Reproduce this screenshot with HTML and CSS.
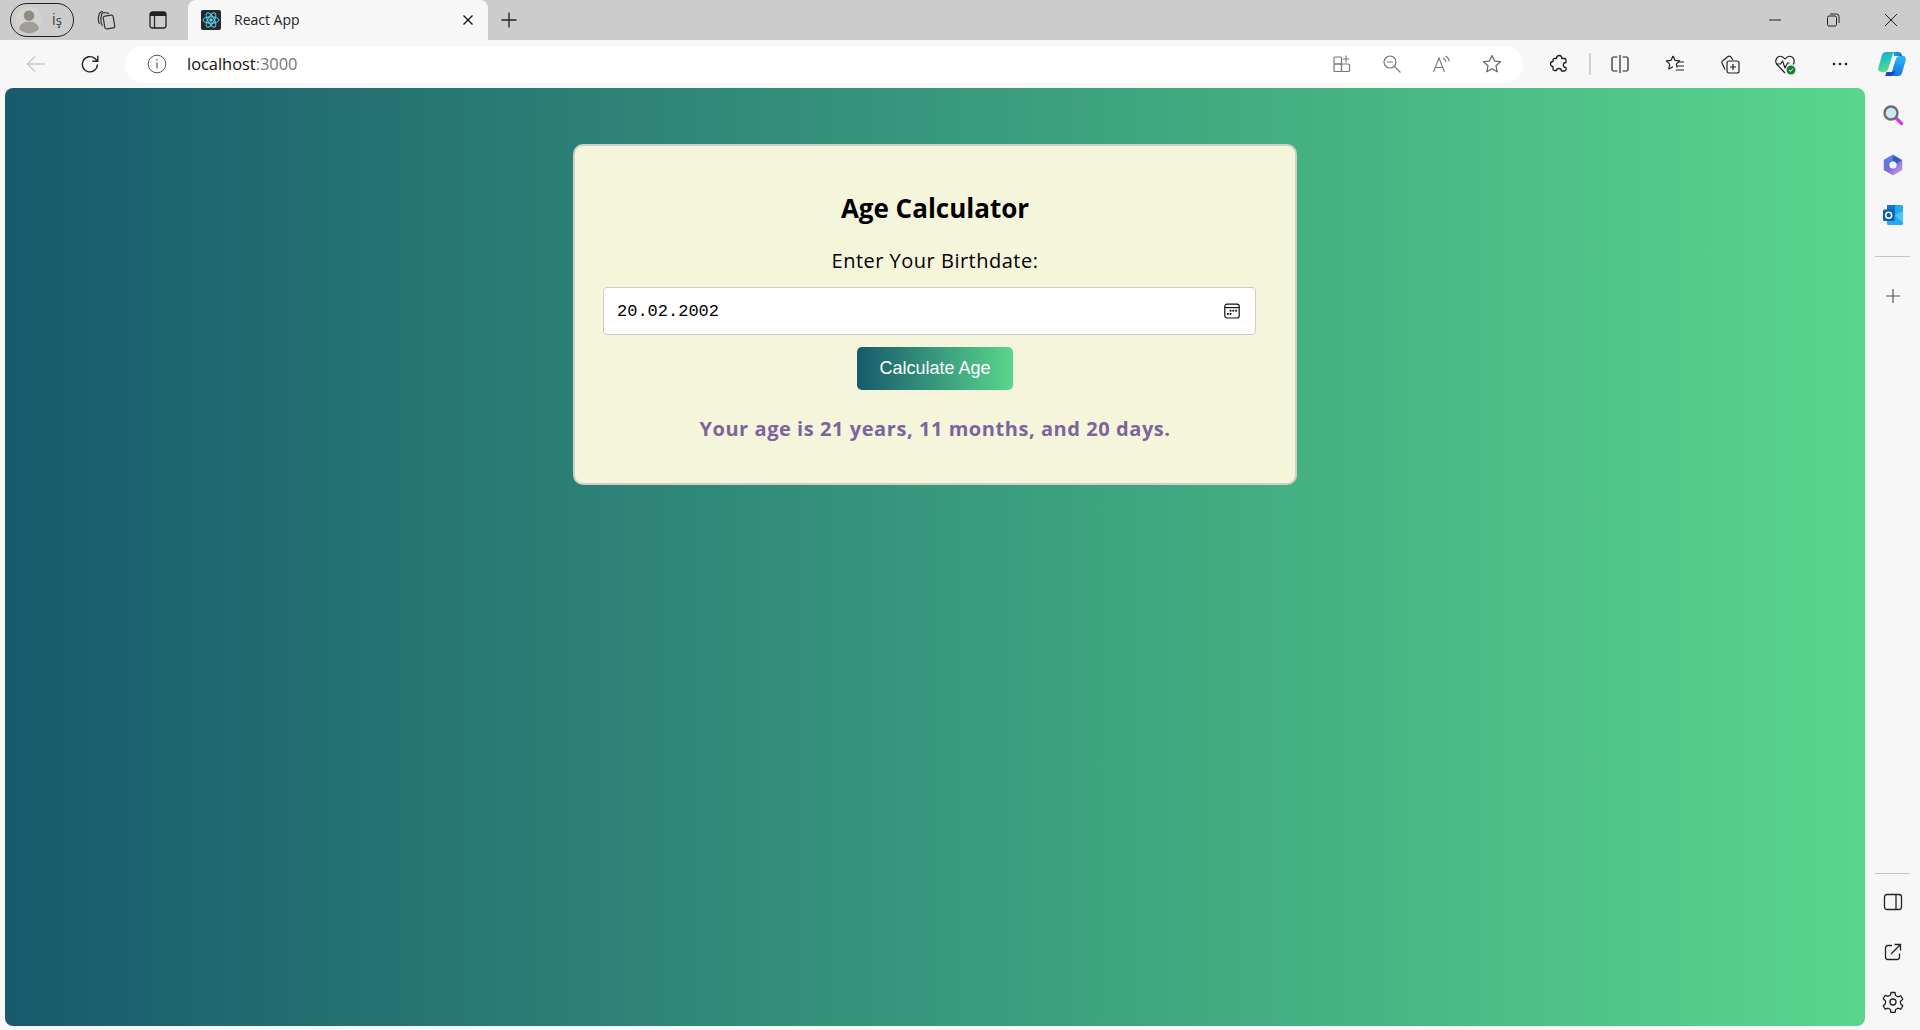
FILE: index.html
```html
<!DOCTYPE html>
<html lang="en">
<head>
<meta charset="utf-8">
<title>React App</title>
<link rel="stylesheet" href="styles.css">
</head>
<body>
<div class="browser">
  <header class="tabbar">
    <div class="profile">
      <svg class="avatar" viewBox="0 0 32 32"><circle cx="16" cy="16" r="15.5" fill="#d4d2cf"/><circle cx="16" cy="11" r="6" fill="#8e8b87"/><path d="M4.5 26c1-6 6-8 11.5-8s10.500 2 11.500 8a15.500 15.500 0 0 1-23 0z" fill="#a09d99"/></svg>
      <span class="profile-name">İş</span>
    </div>
    <div class="cell cell-tabs">
      <svg class="i20" viewBox="0 0 20 20" fill="none" stroke="#333" stroke-width="1.200"><rect x="8" y="5.500" width="10" height="13" rx="2" transform="rotate(-10 13 12)"/><path d="M6.500 16C4.500 13 4.500 9 5.500 4.500 6 3 7 2.500 8.500 2.500L13 3.300M3.500 14C2 11 2 8 3 4.500 3.500 2.500 5 1.500 7 1.500"/></svg>
    </div>
    <div class="cell cell-tabs">
      <svg class="i20" viewBox="0 0 20 20"><rect x="2" y="2" width="16" height="16" rx="2.500" fill="none" stroke="#222" stroke-width="1.300"/><path d="M2 4.500A2.500 2.500 0 0 1 4.500 2h11A2.500 2.500 0 0 1 18 4.500V6H2z" fill="#222"/><path d="M6.500 6v12" stroke="#222" stroke-width="1.200"/></svg>
    </div>
    <div class="tab">
      <svg class="favicon" viewBox="0 0 20 20"><rect width="20" height="20" rx="2" fill="#25282c"/><g fill="none" stroke="#61dafb" stroke-width="1"><ellipse cx="10" cy="10" rx="8" ry="3.200"/><ellipse cx="10" cy="10" rx="8" ry="3.200" transform="rotate(60 10 10)"/><ellipse cx="10" cy="10" rx="8" ry="3.200" transform="rotate(120 10 10)"/></g><circle cx="10" cy="10" r="1.700" fill="#61dafb"/></svg>
      <span class="tab-title">React App</span>
      <svg class="tab-close" viewBox="0 0 12 12"><path d="M1.500 1.500l9 9M10.500 1.500l-9 9" stroke="#111" stroke-width="1.300"/></svg>
    </div>
    <div class="cell cell-plus">
      <svg class="i20" viewBox="0 0 20 20"><path d="M10 2.500v15M2.500 10h15" stroke="#222" stroke-width="1.300"/></svg>
    </div>
    <div class="spacer"></div>
    <div class="cell cell-win"><svg class="i14" viewBox="0 0 14 14"><path d="M1 7h12" stroke="#222" stroke-width="1"/></svg></div>
    <div class="cell cell-win"><svg class="i14" viewBox="0 0 14 14" fill="none" stroke="#222" stroke-width="1"><rect x="1.500" y="3" width="9" height="10" rx="1.500"/><path d="M4 1h6.500A2.500 2.500 0 0 1 13 3.500V10"/></svg></div>
    <div class="cell cell-win"><svg class="i14" viewBox="0 0 14 14"><path d="M1 1l12 12M13 1L1 13" stroke="#222" stroke-width="1"/></svg></div>
  </header>

  <nav class="toolbar">
    <div class="cell cell-nav"><svg class="i20" viewBox="0 0 20 20" fill="none" stroke="#c9c9c9" stroke-width="1.300"><path d="M19 10H1.500M9 2.500L1.500 10 9 17.500"/></svg></div>
    <div class="cell cell-nav cell-reload"><svg class="i20" viewBox="0 0 20 20" fill="none" stroke="#222" stroke-width="1.400"><path d="M17.500 10.500A7.600 7.600 0 1 1 15 4.600L17.500 7"/><path d="M17.800 1.800V7.300H12.300"/></svg></div>
    <div class="address">
      <svg class="info" viewBox="0 0 20 20" fill="none" stroke="#555" stroke-width="1"><circle cx="10" cy="10" r="8.800"/><path d="M10 8.500v6" stroke-width="1.200"/><circle cx="10" cy="5.800" r=".8" fill="#555" stroke="none"/></svg>
      <span class="url">localhost<span class="url-port">:3000</span></span>
      <div class="spacer"></div>
      <div class="cell cell-addr"><svg class="i20" viewBox="0 0 20 20" fill="none" stroke="#777" stroke-width="1.200"><rect x="2" y="3" width="7.500" height="7" rx="1"/><rect x="2" y="10" width="7.500" height="7.500" rx="1"/><rect x="9.500" y="10" width="8" height="7.500" rx="1"/><path d="M14 1.500v7M10.800 5h6.500"/></svg></div>
      <div class="cell cell-addr"><svg class="i20" viewBox="0 0 20 20" fill="none" stroke="#777" stroke-width="1.200"><circle cx="8" cy="8" r="6"/><path d="M12.500 12.500l6 6M5 8h6"/></svg></div>
      <div class="cell cell-addr"><svg class="i20" viewBox="0 0 20 20" fill="none" stroke="#777" stroke-width="1.100"><path d="M1.500 18L7 4l5.500 14M3.300 13.500h7.400"/><path d="M11 4c1.500.7 2.500 2 3 4M13.500 2c2 1 3.300 3 3.800 5.500"/></svg></div>
      <div class="cell cell-addr"><svg class="i20" viewBox="0 0 20 20" fill="none" stroke="#666" stroke-width="1.200" stroke-linejoin="round"><path d="M10 1.500l2.500 5.600 6 .6-4.500 4.100 1.300 6-5.300-3.100-5.300 3.100 1.300-6L1.500 7.700l6-.6z"/></svg></div>
    </div>
    <div class="cell cell-ext"><svg class="i20" viewBox="0 0 20 20" fill="none" stroke="#222" stroke-width="1.300" stroke-linejoin="round"><path d="M7.500 4.500C7.500 2.800 8.700 1.500 10.200 1.500s2.700 1.300 2.700 3h2.600c.8 0 1.500.7 1.500 1.500v2.500c-1.600 0-2.700 1-2.700 2.500s1.100 2.500 2.700 2.500v2c0 .8-.7 1.500-1.500 1.500h-3c0-1.500-1-2.500-2.500-2.500S7.500 15 7.500 16.500h-2c-.8 0-1.500-.7-1.500-1.500v-2.500c-1.500 0-2.500-1-2.500-2.500S2.500 7.500 4 7.500V6c0-.8.700-1.500 1.500-1.500z"/></svg></div>
    <div class="tool-sep"></div>
    <div class="cell cell-tool"><svg class="i20" viewBox="0 0 20 20" fill="none" stroke="#222" stroke-width="1.200"><path d="M7.500 3H3.500A1.500 1.500 0 0 0 2 4.500v11A1.500 1.500 0 0 0 3.500 17h4M12.500 3h4A1.500 1.500 0 0 1 18 4.500v11a1.500 1.500 0 0 1-1.500 1.500h-4M10 1v18"/></svg></div>
    <div class="cell cell-tool"><svg class="i20" viewBox="0 0 20 20" fill="none" stroke="#222" stroke-width="1.200" stroke-linejoin="round"><path d="M8 2l2 4.300 4.700.6-3.400 3.200.8 3.400M8 2L6 6.300l-4.700.6 3.400 3.200L3.800 15 8 12.800"/><path d="M13 8h6M12 12h7M11 16h8"/></svg></div>
    <div class="cell cell-tool"><svg class="i20" viewBox="0 0 20 20" fill="none" stroke="#222" stroke-width="1.200"><rect x="7" y="7" width="12" height="12" rx="2"/><path d="M13 10v6M10 13h6"/><path d="M5 15.500L2 9c-.4-1 0-1.700.8-2.200L8 2.500c1-.7 2-.5 2.700.4L13 6"/></svg></div>
    <div class="cell cell-tool"><svg class="i20 wide" viewBox="0 0 22 22" fill="none" stroke="#222" stroke-width="1.200" stroke-linejoin="round"><path d="M11 20L3 11.500C1 9 1.500 5.500 4 4c2.500-1.500 5-.5 7 2 2-2.500 4.500-3.500 7-2 2.500 1.500 3 5 1 7.500"/><path d="M2 11h4.500l2-3 2.500 7 2.500-5h2"/><circle cx="17" cy="17" r="4.500" fill="#1c7d36" stroke="none"/><path d="M15 17l1.500 1.500 2.500-3" stroke="#fff" stroke-width="1"/></svg></div>
    <div class="cell cell-tool"><svg class="i20" viewBox="0 0 20 20" fill="#222"><circle cx="4" cy="10" r="1.300"/><circle cx="10" cy="10" r="1.300"/><circle cx="16" cy="10" r="1.300"/></svg></div>
    <div class="cell cell-copilot"><svg class="copilot" viewBox="0 0 30 30">
      <defs>
        <linearGradient id="cpA" x1="0" y1="0" x2="0" y2="1"><stop offset="0" stop-color="#1b6fe0"/><stop offset=".6" stop-color="#1e9ff0"/><stop offset="1" stop-color="#2ab8f2"/></linearGradient>
        <linearGradient id="cpB" x1="0" y1="0" x2=".3" y2="1"><stop offset="0" stop-color="#16a8df"/><stop offset=".55" stop-color="#2cc9b4"/><stop offset="1" stop-color="#5fd88a"/></linearGradient>
        <linearGradient id="cpC" x1="0" y1="0" x2="1" y2="0"><stop offset="0" stop-color="#15a0e4"/><stop offset="1" stop-color="#1f6fe0"/></linearGradient>
      </defs>
      <path d="M9 3h11c-2.500 0-4 1.500-4.800 4L11.500 19c-.8 2.500-2.300 4-4.500 4H4.200c-2.200 0-3.600-2-2.900-4.200L5 6c.6-2 2-3 4-3z" fill="url(#cpB)"/>
      <g transform="rotate(180 15 15)"><path d="M9 3h11c-2.500 0-4 1.500-4.800 4L11.500 19c-.8 2.500-2.300 4-4.500 4H4.200c-2.200 0-3.600-2-2.900-4.200L5 6c.6-2 2-3 4-3z" fill="url(#cpA)"/></g>
      <path d="M17 3h4c2 0 3.400 1.200 4 3l.7 2.500c-1-1-2-1.500-3.500-1.500H16.800c.6-2 .2-4 .2-4z" fill="url(#cpC)"/>
      <path d="M8 27h5c2 0 3.500-1 4.300-3l1-3c-.8 1.300-2 2-3.800 2H9.500c-.5 1.800-.7 3-1.500 4z" fill="#1746b8"/>
    </svg></div>
  </nav>

  <div class="main">
    <main class="viewport">
      <section class="card">
        <h1 class="title">Age Calculator</h1>
        <label class="label" for="birth">Enter Your Birthdate:</label>
        <div class="date-input" id="birth">
          <span class="date-value">20.02.2002</span>
          <svg class="calendar" viewBox="0 0 16 16" fill="none" stroke="#111" stroke-width="1.200"><rect x=".8" y="1.200" width="14.400" height="13.800" rx="2.200"/><path d="M.8 4.600h14.400" stroke-width="1.200"/><g fill="#111" stroke="none"><rect x="5.600" y="6.800" width="1.800" height="1.800"/><rect x="8.400" y="6.800" width="1.800" height="1.800"/><rect x="11.200" y="6.800" width="1.800" height="1.800"/><rect x="3" y="10" width="1.800" height="1.800"/><rect x="5.600" y="10" width="1.800" height="1.800"/></g></svg>
        </div>
        <button class="calc" type="button">Calculate Age</button>
        <p class="result">Your age is 21 years, 11 months, and 20 days.</p>
      </section>
    </main>
    <aside class="sidebar">
      <div class="cell cell-side first"><svg class="i22" viewBox="0 0 22 22"><path d="M13 13l6.500 6.500" stroke="#c93ee0" stroke-width="3.400" stroke-linecap="round"/><circle cx="9" cy="9" r="6.500" fill="#cfe6f5" stroke="#6d6d6d" stroke-width="2.400"/></svg></div>
      <div class="cell cell-side"><svg class="i22" viewBox="0 0 22 22"><defs><linearGradient id="m3" gradientUnits="userSpaceOnUse" x1="2" y1="2" x2="20" y2="20"><stop offset="0" stop-color="#3f8fe0"/><stop offset=".5" stop-color="#8068d8"/><stop offset="1" stop-color="#cfa4ec"/></linearGradient></defs><path d="M11 1.500l8.500 4.800v9.400L11 20.500l-8.500-4.800V6.300z" fill="url(#m3)" stroke="url(#m3)" stroke-width="1.500" stroke-linejoin="round"/><path d="M11 1.500l8.500 4.800-4.500 3L11 7z" fill="#2a5cc0"/><circle cx="11" cy="11" r="3.600" fill="#f7f7f7"/></svg></div>
      <div class="cell cell-side"><svg class="i22" viewBox="0 0 22 22"><rect x="5" y="1" width="16" height="20" rx="1.500" fill="#28a8ea"/><path d="M5 1h8v10H5z" fill="#0f78d4"/><path d="M13 11l8-4v12z" fill="#50c4f5"/><rect x="1" y="5.500" width="11.500" height="11.500" rx="1.500" fill="#0a5fb0"/><circle cx="6.700" cy="11.200" r="3" fill="none" stroke="#fff" stroke-width="1.500"/></svg></div>
      <div class="side-sep sep-top"></div>
      <div class="cell cell-side"><svg class="i16" viewBox="0 0 16 16"><path d="M8 1v14M1 8h14" stroke="#555" stroke-width="1.200"/></svg></div>
      <div class="spacer"></div>
      <div class="side-sep sep-bottom"></div>
      <div class="cell cell-side"><svg class="i20" viewBox="0 0 20 20" fill="none" stroke="#222" stroke-width="1.300"><rect x="1.500" y="2.500" width="17" height="15" rx="2.500"/><path d="M13 2.500v15"/></svg></div>
      <div class="cell cell-side"><svg class="i20" viewBox="0 0 20 20" fill="none" stroke="#222" stroke-width="1.300"><path d="M9 3.500H5A2.500 2.500 0 0 0 2.500 6v9A2.500 2.500 0 0 0 5 17.500h9a2.500 2.500 0 0 0 2.500-2.500v-3.500"/><path d="M8 12l9-9M11.500 2.500h6v6"/></svg></div>
      <div class="cell cell-side"><svg class="i22" viewBox="0 0 22 22" fill="none" stroke="#222" stroke-width="1.300" stroke-linejoin="round"><circle cx="11" cy="11" r="3"/><path d="M9 1.500h4l.6 3 2.300 1.300 2.900-1 2 3.500-2.300 2v2.400l2.300 2-2 3.500-2.900-1-2.300 1.300-.6 3H9l-.6-3-2.300-1.300-2.900 1-2-3.500 2.300-2V9.800L1.200 7.800l2-3.500 2.900 1 2.300-1.300z"/></svg></div>
    </aside>
  </div>
</div>
</body>
</html>
```
FILE: styles.css
```css
* { box-sizing: border-box; }
html, body { margin: 0; height: 100%; overflow: hidden; }
body { font-family: "Open Sans", "Noto Sans", sans-serif; background: #f7f7f7; }
.browser { display: flex; flex-direction: column; width: 1920px; height: 1030px; }
.spacer { flex: 1; }
.cell { display: flex; align-items: center; justify-content: center; flex: none; }
svg { display: block; flex: none; }
.i14 { width: 14px; height: 14px; }
.i16 { width: 16px; height: 16px; }
.i20 { width: 20px; height: 20px; }
.i22 { width: 22px; height: 22px; }
.wide { width: 22px; height: 22px; }

.tabbar { display: flex; align-items: center; height: 40px; padding-left: 10px; background: #cccccc; flex: none; }
.profile { display: flex; align-items: center; width: 64px; height: 34px; margin-right: 6px; padding-left: 4px; border: 1.500px solid #222; border-radius: 17px; }
.avatar { width: 28px; height: 28px; }
.profile-name { margin-left: 9px; font-size: 13px; color: #333; }
.cell-tabs { width: 52px; height: 40px; }
.tab { display: flex; align-items: center; width: 300px; height: 40px; margin-left: 4px; padding: 0 13px; background: #f7f7f7; border-radius: 8px 8px 0 0; }
.favicon { width: 20px; height: 20px; }
.tab-title { margin-left: 13px; margin-bottom: 2px; font-size: 14px; color: #222; flex: 1; }
.tab-close { width: 12px; height: 12px; margin-right: 1px; }
.cell-plus { width: 42px; height: 40px; }
.cell-win { width: 58px; height: 40px; }

.toolbar { display: flex; align-items: center; height: 48px; padding-left: 8px; background: #f7f7f7; flex: none; }
.cell-nav { width: 55px; height: 40px; }
.cell-reload { padding-right: 2px; }
.address { display: flex; align-items: center; width: 1398px; height: 37px; margin-left: 7px; margin-right: 11px; padding: 0 6px 0 22px; background: #fff; border-radius: 19px; }
.info { width: 20px; height: 20px; }
.url { margin-left: 20px; margin-bottom: 2px; font-size: 16.400px; color: #111; }
.url-port { color: #767676; }
.cell-addr { width: 50px; height: 37px; }
.cell-ext { width: 50px; height: 40px; }
.tool-sep { width: 2px; height: 22px; margin: 0 1px 0 5px; background: #d0d0d0; }
.cell-tool { width: 55px; height: 40px; }
.cell-copilot { width: 50px; height: 40px; }
.copilot { width: 30px; height: 30px; }

.main { display: flex; flex: 1; min-height: 0; }
.viewport { display: flex; justify-content: center; align-items: flex-start; width: 1860px; height: 938px; margin-left: 5px; padding-top: 56px; border-radius: 8px; background: linear-gradient(90deg, #175a6c, #59d68c); }
.card { display: flex; flex-direction: column; align-items: center; width: 724px; height: 341px; padding: 0 28px; background: #f5f5dc; border: 2px solid #cfcfc8; border-radius: 10px; }
.title { margin: 45px 0 0; font-family: "Comic Sans MS", "Open Sans", sans-serif; font-size: 26px; font-weight: 700; line-height: 34px; color: #000; }
.label { margin-top: 23px; font-family: "Comic Sans MS", "Open Sans", sans-serif; font-size: 20px; letter-spacing: .5px; line-height: 25px; color: #000; }
.date-input { display: flex; align-items: center; justify-content: space-between; align-self: flex-start; width: 653px; height: 48px; margin-top: 14px; padding: 0 15px 0 13px; background: #fff; border: 1.500px solid #ccc; border-radius: 4px; }
.date-value { font-family: "Liberation Mono", monospace; font-size: 17px; color: #000; }
.calendar { width: 16px; height: 16px; }
.calc { width: 156px; height: 43px; margin-top: 12px; padding: 0; border: 0; border-radius: 5px; background: linear-gradient(90deg, #175a6c, #59d68c); color: #fff; font-family: "Liberation Sans", Arial, sans-serif; font-size: 18px; }
.result { margin: 25px 0 0; font-family: "Comic Sans MS", "Open Sans", sans-serif; font-size: 20px; font-weight: 700; letter-spacing: .56px; line-height: 28px; color: #7c649e; }

.sidebar { display: flex; flex-direction: column; align-items: center; flex: 1; padding-bottom: 3px; }
.cell-side { width: 100%; height: 50px; }
.first { margin-top: 2px; }
.side-sep { width: 35px; height: 1px; background: #c4c4c4; flex: none; }
.sep-top { margin: 16px 0 14px; }
.sep-bottom { margin-bottom: 3px; }
```
